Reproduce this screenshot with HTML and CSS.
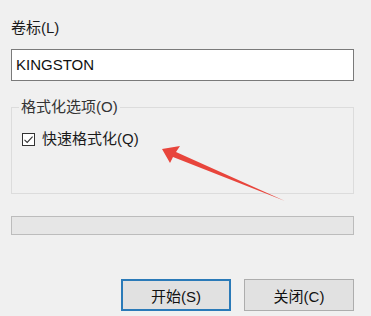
FILE: index.html
```html
<!DOCTYPE html>
<html>
<head>
<meta charset="utf-8">
<link rel="stylesheet" href="styles.css">
</head>
<body>
<div class="dialog">
  <div class="label">卷标(L)</div>
  <div class="textbox">KINGSTON</div>
  <fieldset class="group">
    <legend>格式化选项(O)</legend>
    <label class="check">
      <span class="box"><svg width="13" height="13" viewBox="0 0 13 13"><path d="M2.5 6.8 L5.2 9.4 L10.6 3.6" fill="none" stroke="#333" stroke-width="1.1"/></svg></span>
      <span>快速格式化(Q)</span>
    </label>
  </fieldset>
  <div class="progress"></div>
  <div class="buttons">
    <div class="btn default">开始(S)</div>
    <div class="btn">关闭(C)</div>
  </div>
  <svg class="arrow" width="371" height="316" viewBox="0 0 371 316">
    <path d="M162 149 L180 146 L176 152 L285 201 L173 157 L170 163 Z" fill="#e8453c"/>
  </svg>
</div>
</body>
</html>
```

FILE: styles.css
```css
html, body {
  margin: 0;
  padding: 0;
  background: #f0f0f0;
}
.dialog {
  position: relative;
  width: 371px;
  height: 316px;
  box-sizing: border-box;
  padding: 18px 17px 0 11px;
  font-family: "Liberation Sans", "Noto Sans CJK SC", sans-serif;
  font-size: 15px;
  color: #1a1a1a;
  display: flex;
  flex-direction: column;
}
.label {
  line-height: 20px;
  height: 20px;
}
.textbox {
  margin-top: 11px;
  height: 32px;
  box-sizing: border-box;
  border: 1px solid #7a7a7a;
  background: #fff;
  padding: 0 4px;
  line-height: 30px;
  color: #111;
}
.group {
  margin: 16px 0 0 0;
  padding: 0;
  height: 97px;
  box-sizing: border-box;
  border: 1px solid #dcdcdc;
  min-width: 0;
}
.group legend {
  margin-left: 7px;
  padding: 0 2px;
  line-height: 20px;
  color: #333;
}
.check {
  display: flex;
  align-items: center;
  gap: 7px;
  margin: 12px 0 0 10px;
  line-height: 20px;
}
.box {
  width: 13px;
  height: 13px;
  box-sizing: border-box;
  border: 1px solid #333;
  background: #fff;
  display: flex;
}
.box svg {
  margin: -1px;
}
.progress {
  margin-top: 22px;
  height: 19px;
  box-sizing: border-box;
  border: 1px solid #bcbcbc;
  background: #e6e6e6;
}
.buttons {
  margin-top: 44px;
  display: flex;
  justify-content: flex-end;
  gap: 13px;
}
.btn {
  width: 110px;
  height: 32px;
  box-sizing: border-box;
  border: 1px solid #adadad;
  background: #e1e1e1;
  display: flex;
  align-items: center;
  justify-content: center;
  color: #111;
}
.btn.default {
  border: 2px solid #2a7ab8;
}
.arrow {
  position: absolute;
  left: 0;
  top: 0;
  pointer-events: none;
}
```
